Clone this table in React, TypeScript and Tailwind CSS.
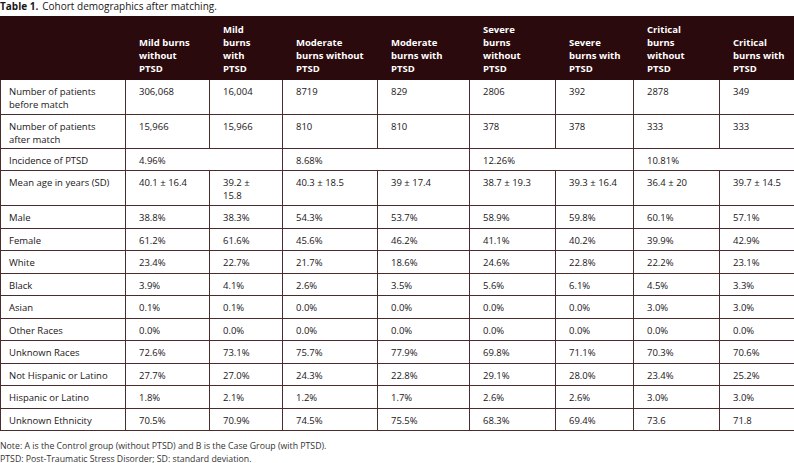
import React from "react";

const headers: string[][] = [
  [],
  ["Mild burns", "without", "PTSD"],
  ["Mild", "burns", "with", "PTSD"],
  ["Moderate", "burns without", "PTSD"],
  ["Moderate", "burns with", "PTSD"],
  ["Severe", "burns", "without", "PTSD"],
  ["Severe", "burns with", "PTSD"],
  ["Critical", "burns", "without", "PTSD"],
  ["Critical", "burns with", "PTSD"],
];

const widths = [125, 84, 73, 95, 92, 86, 78, 86, 75];

type Row = { label: string[]; cells: string[][]; h: string };

const rows: Row[] = [
  {
    label: ["Number of patients", "before match"],
    cells: [["306,068"], ["16,004"], ["8719"], ["829"], ["2806"], ["392"], ["2878"], ["349"]],
    h: "h-[35px]",
  },
  {
    label: ["Number of patients", "after match"],
    cells: [["15,966"], ["15,966"], ["810"], ["810"], ["378"], ["378"], ["333"], ["333"]],
    h: "h-[34px]",
  },
  {
    label: ["Mean age in years (SD)"],
    cells: [
      ["40.1 ± 16.4"],
      ["39.2 ±", "15.8"],
      ["40.3 ± 18.5"],
      ["39 ± 17.4"],
      ["38.7 ± 19.3"],
      ["39.3 ± 16.4"],
      ["36.4 ± 20"],
      ["39.7 ± 14.5"],
    ],
    h: "h-[35px]",
  },
];

const simple: [string, string[]][] = [
  ["Male", ["38.8%", "38.3%", "54.3%", "53.7%", "58.9%", "59.8%", "60.1%", "57.1%"]],
  ["Female", ["61.2%", "61.6%", "45.6%", "46.2%", "41.1%", "40.2%", "39.9%", "42.9%"]],
  ["White", ["23.4%", "22.7%", "21.7%", "18.6%", "24.6%", "22.8%", "22.2%", "23.1%"]],
  ["Black", ["3.9%", "4.1%", "2.6%", "3.5%", "5.6%", "6.1%", "4.5%", "3.3%"]],
  ["Asian", ["0.1%", "0.1%", "0.0%", "0.0%", "0.0%", "0.0%", "3.0%", "3.0%"]],
  ["Other Races", ["0.0%", "0.0%", "0.0%", "0.0%", "0.0%", "0.0%", "0.0%", "0.0%"]],
  ["Unknown Races", ["72.6%", "73.1%", "75.7%", "77.9%", "69.8%", "71.1%", "70.3%", "70.6%"]],
  ["Not Hispanic or Latino", ["27.7%", "27.0%", "24.3%", "22.8%", "29.1%", "28.0%", "23.4%", "25.2%"]],
  ["Hispanic or Latino", ["1.8%", "2.1%", "1.2%", "1.7%", "2.6%", "2.6%", "3.0%", "3.0%"]],
  ["Unknown Ethnicity", ["70.5%", "70.9%", "74.5%", "75.5%", "68.3%", "69.4%", "73.6", "71.8"]],
];

const cellBase = "border border-[#4a2c2c] align-top pt-[5px] whitespace-nowrap";
const firstPad = "pl-[8px]";
const otherPad = "pl-[13px]";

function Lines({ lines }: { lines: string[] }) {
  return (
    <>
      {lines.map((l, i) => (
        <div key={i}>{l}</div>
      ))}
    </>
  );
}

function DataRow({ r }: { r: Row }) {
  return (
    <tr className={r.h}>
      <td className={`${cellBase} ${firstPad}`}>
        <Lines lines={r.label} />
      </td>
      {r.cells.map((c, i) => (
        <td key={i} className={`${cellBase} ${otherPad}`}>
          <Lines lines={c} />
        </td>
      ))}
    </tr>
  );
}

export default function App() {
  return (
    <div
      className="w-[794px] bg-white text-[#1a1617]"
      style={{ fontFamily: '"Open Sans", "Noto Sans", sans-serif' }}
    >
      <div className="h-[16px] text-[10px] leading-[12px]">
        <span className="font-bold">Table 1.</span>
        <span className="ml-[4px]">Cohort demographics after matching.</span>
      </div>
      <table className="table-fixed border-collapse w-[794px] text-[9.5px] leading-[13px]">
        <colgroup>
          {widths.map((w, i) => (
            <col key={i} style={{ width: w }} />
          ))}
        </colgroup>
        <thead>
          <tr className="h-[63px] bg-[#2a0a0c] text-white font-bold">
            {headers.map((h, i) => (
              <th
                key={i}
                className={`border border-[#2a0a0c] align-bottom pb-[4px] text-left font-bold whitespace-nowrap ${
                  i === 0 ? firstPad : otherPad
                }`}
              >
                <Lines lines={h} />
              </th>
            ))}
          </tr>
        </thead>
        <tbody>
          <DataRow r={rows[0]} />
          <DataRow r={rows[1]} />
          <tr className="h-[22px]">
            <td className={`${cellBase} ${firstPad}`}>Incidence of PTSD</td>
            <td colSpan={2} className={`${cellBase} ${otherPad}`}>4.96%</td>
            <td colSpan={2} className={`${cellBase} ${otherPad}`}>8.68%</td>
            <td colSpan={2} className={`${cellBase} ${otherPad}`}>12.26%</td>
            <td colSpan={2} className={`${cellBase} ${otherPad}`}>10.81%</td>
          </tr>
          <DataRow r={rows[2]} />
          {simple.map(([label, vals]) => (
            <tr key={label} className="h-[22.5px]">
              <td className={`${cellBase} ${firstPad}`}>{label}</td>
              {vals.map((v, i) => (
                <td key={i} className={`${cellBase} ${otherPad}`}>
                  {v}
                </td>
              ))}
            </tr>
          ))}
        </tbody>
      </table>
      <div className="mt-[9px] text-[8.75px] leading-[12.5px] text-[#333]">
        <div>Note: A is the Control group (without PTSD) and B is the Case Group (with PTSD).</div>
        <div>PTSD: Post-Traumatic Stress Disorder; SD: standard deviation.</div>
      </div>
    </div>
  );
}
